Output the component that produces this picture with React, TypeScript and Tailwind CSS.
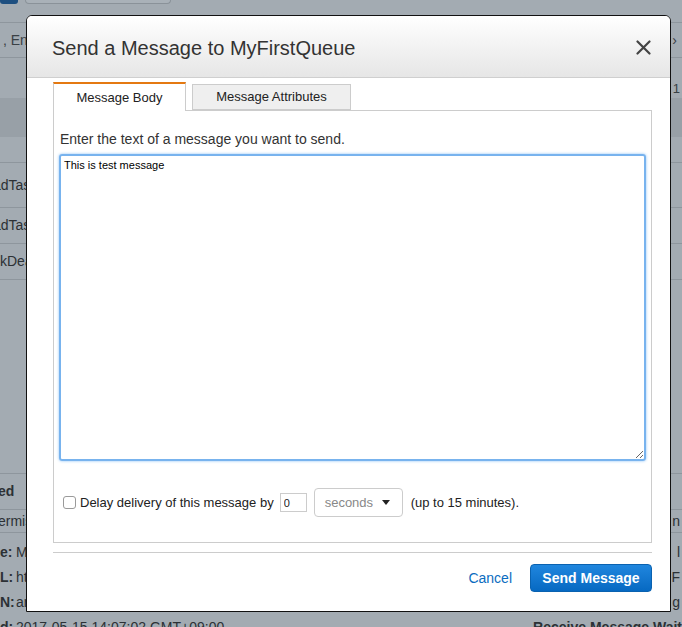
import { ReactNode } from "react";

const font = { fontFamily: '"Liberation Sans", Arial, sans-serif' };

function BgRow({ children, className = "" }: { children?: ReactNode; className?: string }) {
  return (
    <div className={`flex items-center border-b border-[#8e969d] px-[2px] text-[14px] text-[#2c3135] ${className}`}>
      {children}
    </div>
  );
}

function BackgroundPage() {
  return (
    <div className="h-[627px] w-[682px] overflow-hidden bg-[#a3abb2]">
      <div className="flex h-[4px] gap-[7px] overflow-hidden">
        <div className="h-[4px] w-[18px] rounded-b-[3px] bg-[#1d4f80]" />
        <div className="h-[4px] w-[146px] rounded-b-[4px] border border-t-0 border-[#8a9299] bg-[#a9b1b8]" />
      </div>
      <div className="mt-[18px] flex h-[36px] items-center border-y border-[#8e969d] px-[3px] text-[14px] text-[#3a4045]">
        <span>, Ent</span>
        <span className="ml-auto mr-[2px] text-[#3a4045]">›</span>
      </div>
      <div className="flex h-[40px] items-end justify-end pr-[2px] text-[13px] text-[#3a4045]">1</div>
      <div className="h-[39px] bg-[#98a0a7]" />
      <div className="h-[26px] border-b border-[#8e969d]" />
      <BgRow className="h-[45px]">
        <span className="-ml-[9px]">adTask</span>
      </BgRow>
      <BgRow className="h-[36px]">
        <span className="-ml-[9px]">adTask</span>
      </BgRow>
      <BgRow className="h-[36px]">
        <span className="-ml-[2px]">kDead</span>
      </BgRow>
      <div className="h-[193px]" />
      <div className="flex h-[37px] items-center border-y border-[#8e969d] text-[14px] font-bold text-[#2c3135]">
        <span className="-ml-[2px]">ed</span>
      </div>
      <div className="flex h-[23px] items-center border-b border-[#8e969d] text-[14px] text-[#2c3135]">
        <span className="-ml-[2px]">ermis</span>
        <span className="ml-auto pr-[2px]">n</span>
      </div>
      <div className="flex flex-col pt-[7px] text-[14px] leading-[25px] text-[#2c3135]">
        <div className="flex">
          <span className="w-[12px] overflow-hidden font-bold">e:</span>
          <span className="ml-[4px]">M</span>
          <span className="ml-auto pr-[2px]">l</span>
        </div>
        <div className="flex">
          <span className="w-[12px] font-bold">L:</span>
          <span className="ml-[4px]">ht</span>
          <span className="ml-auto pr-[2px]">F</span>
        </div>
        <div className="flex">
          <span className="w-[12px] font-bold">N:</span>
          <span className="ml-[4px]">ar</span>
          <span className="ml-auto pr-[2px]">g</span>
        </div>
        <div className="flex">
          <span className="w-[12px] font-bold">d:</span>
          <span className="ml-[4px]">2017-05-15 14:07:02 GMT+09:00</span>
          <span className="ml-auto font-bold">Receive Message Wait</span>
        </div>
      </div>
    </div>
  );
}

function CloseIcon() {
  return (
    <svg width="15" height="15" viewBox="0 0 15 15" className="block">
      <path d="M1.5 1.5 L13.5 13.5 M13.5 1.5 L1.5 13.5" stroke="#444" strokeWidth="2.2" strokeLinecap="round" />
    </svg>
  );
}

function SendMessageDialog() {
  return (
    <div className="absolute left-[26px] top-[15px] flex h-[597px] w-[645px] flex-col overflow-hidden rounded-t-[6px] border border-[#111] bg-white">
      <div className="flex h-[62px] shrink-0 items-center border-b border-[#cfcfcf] bg-gradient-to-b from-white to-[#e6e6e6] pl-[25px] pr-[19px]">
        <h1 className="pt-[3px] text-[20px] text-[#333]">Send a Message to MyFirstQueue</h1>
        <button className="ml-auto pt-[1px]">
          <CloseIcon />
        </button>
      </div>

      <div className="flex flex-1 flex-col pl-[26px] pr-[18px] pt-[4px]">
        <div className="flex h-[28px] items-end gap-[6px]">
          <div className="relative z-10 -mb-px flex h-[29px] w-[133px] items-center justify-center border-x border-t-2 border-x-[#ccc] border-t-[#e47911] bg-white text-[13px] text-[#222]">
            Message Body
          </div>
          <div className="flex h-[26px] w-[159px] items-center justify-center border border-[#ccc] bg-[#efefef] text-[13px] text-[#222]">
            Message Attributes
          </div>
        </div>

        <div className="flex h-[433px] flex-col border border-[#ccc] px-[5px]">
          <p className="mt-[20px] pl-[1px] text-[14px] leading-[16px] text-[#333]">
            Enter the text of a message you want to send.
          </p>
          <textarea
            className="mt-[7px] h-[307px] w-full resize-y rounded-[3px] border-2 border-[#78b3ee] px-[3px] py-[2px] text-[11px] leading-[14px] text-black shadow-[0_0_3px_#8cc2f5] outline-none"
            style={font}
            defaultValue="This is test message"
          />
          <div className="mt-[27px] flex items-center pl-[4px] text-[13px] text-[#222]">
            <span className="h-[13px] w-[13px] rounded-[3px] border border-[#9a9a9a] bg-white" />
            <span className="ml-[4px]">Delay delivery of this message by</span>
            <input
              className="ml-[6px] h-[19px] w-[27px] border border-[#ccc] px-[3px] text-[11px] text-[#222] outline-none"
              style={font}
              defaultValue="0"
            />
            <div className="ml-[7px] flex h-[29px] w-[89px] items-center rounded-[4px] border border-[#ccc] bg-white pl-[10px] pr-[12px] text-[13px] text-[#888]">
              <span>seconds</span>
              <svg width="8" height="5" viewBox="0 0 8 5" className="ml-auto">
                <path d="M0 0 H8 L4 5 Z" fill="#222" />
              </svg>
            </div>
            <span className="ml-[8px]">(up to 15 minutes).</span>
          </div>
        </div>

        <div className="mt-[9px] border-t border-[#ccc]" />

        <div className="mt-[11px] flex items-center justify-end">
          <button className="text-[14px] text-[#0a6cc0]">Cancel</button>
          <button className="ml-[18px] h-[28px] w-[122px] rounded-[4px] border border-[#0a62b0] bg-gradient-to-b from-[#1f86de] to-[#0669c2] text-[14px] font-bold text-white">
            Send Message
          </button>
        </div>
      </div>
    </div>
  );
}

export default function App() {
  return (
    <div className="relative h-[627px] w-[682px] overflow-hidden" style={font}>
      <BackgroundPage />
      <SendMessageDialog />
    </div>
  );
}
